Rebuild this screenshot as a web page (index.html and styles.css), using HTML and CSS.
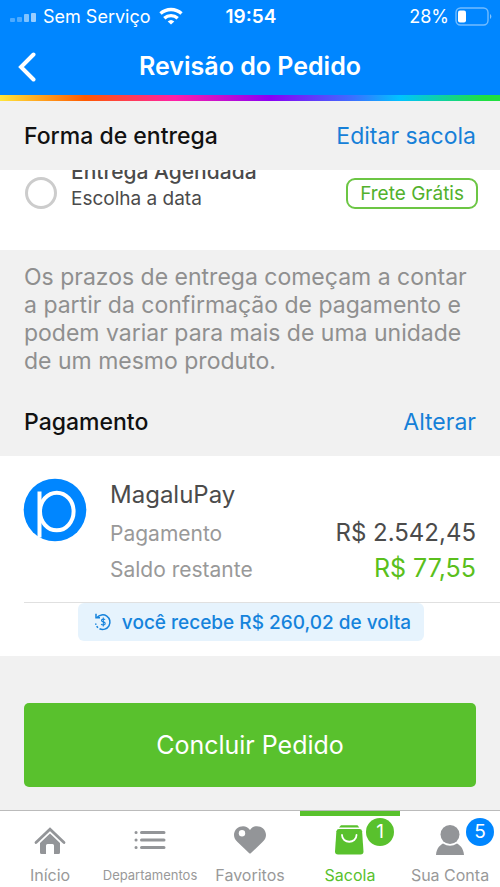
FILE: index.html
```html
<!DOCTYPE html>
<html lang="pt-BR">
<head>
<meta charset="utf-8">
<meta name="viewport" content="width=device-width, initial-scale=1">
<title>Revisão do Pedido</title>
<link rel="stylesheet" href="styles.css">
</head>
<body>
<header class="header">
  <div class="status">
    <div class="status-left">
      <svg class="signal" width="27" height="10" viewBox="0 0 27 10" fill="#fff" aria-hidden="true"><rect x="0" y="5" width="5" height="4" rx="1" opacity=".3"/><rect x="7" y="4" width="5" height="5" rx="1" opacity=".3"/><rect x="14" y="1" width="5" height="8" rx="1" opacity=".5"/><rect x="21" y="0" width="5" height="9" rx="1" opacity=".6"/></svg>
      <span>Sem Serviço</span>
      <svg class="wifi" width="24" height="18" viewBox="0 0 24 18" fill="none" stroke="#fff" stroke-width="3.400" aria-hidden="true"><path d="M1.500 6.600a15.500 15.500 0 0 1 21 0"/><path d="M5.300 11.200a10 10 0 0 1 13.400 0"/><path d="M12 17.500 8.700 14.400a4.900 4.900 0 0 1 6.600 0z" fill="#fff" stroke="none"/></svg>
    </div>
    <time class="clock">19:54</time>
    <div class="status-right">
      <span>28%</span>
      <svg width="37" height="19" viewBox="0 0 37 19" aria-hidden="true"><rect x="1" y="1" width="32" height="17" rx="4.500" fill="none" stroke="#fff" stroke-opacity=".45" stroke-width="1.400"/><rect x="3" y="3.400" width="8" height="12.200" rx="2" fill="#fff"/><path d="M35 7v5a3 3 0 0 0 0-5z" fill="#fff" opacity=".5"/></svg>
    </div>
  </div>
  <div class="nav">
    <button class="back" type="button" aria-label="Voltar"><svg width="18" height="30" viewBox="0 0 18 30" fill="none" stroke="#fff" stroke-width="4" stroke-linecap="round"><path d="M15.500 2.500 3 15l12.500 12.500"/></svg></button>
    <h1 class="title">Revisão do Pedido</h1>
  </div>
  <div class="rainbow"></div>
</header>
<main>
  <section>
    <div class="section-head">
      <h2>Forma de entrega</h2>
      <a href="#sacola">Editar sacola</a>
    </div>
    <div class="option">
      <input class="radio" type="radio" name="entrega" id="agendada">
      <label class="option-text" for="agendada"><span class="option-name">Entrega Agendada</span><span class="option-sub">Escolha a data</span></label>
      <span class="free">Frete Grátis</span>
    </div>
    <p class="note">Os prazos de entrega começam a contar a partir da confirmação de pagamento e podem variar para mais de uma unidade de um mesmo produto.</p>
  </section>
  <section>
    <div class="section-head">
      <h2>Pagamento</h2>
      <a href="#pagamento">Alterar</a>
    </div>
    <div class="pay-card">
      <div class="pay">
        <svg class="pay-logo" width="64" height="64" viewBox="0 0 64 64" role="img" aria-label="MagaluPay"><circle cx="32" cy="32" r="31.300" fill="#0086ff"/><g fill="none" stroke="#fff"><path d="M16.500 13.500v46" stroke-width="4"/><ellipse cx="33.800" cy="33.500" rx="16.800" ry="18.800" stroke-width="4"/></g></svg>
        <div class="pay-body">
          <h3>MagaluPay</h3>
          <dl class="amounts">
            <dt>Pagamento</dt><dd>R$ 2.542,45</dd>
            <dt>Saldo restante</dt><dd class="balance">R$ 77,55</dd>
          </dl>
        </div>
      </div>
      <div class="cashback-row">
        <p class="cashback">
          <svg width="18" height="18" viewBox="0 0 18 18" fill="none" stroke="#1583dc" stroke-width="1.500" aria-hidden="true"><path d="M3 4.500A7.300 7.300 0 1 1 5.500 15.700"/><path d="M4 14.700A7.300 7.300 0 0 1 1.700 10.500" stroke-dasharray="2 1.500"/><path d="M2 .8v4h4"/><path d="M11 6.800C10.500 5.800 7.500 5.700 7.500 7.400c0 2 3.700 1 3.700 3 0 1.900-3.400 1.800-4 .5M9.300 4.600v8.800" stroke-width="1.100"/></svg>
          <span>você recebe R$ 260,02 de volta</span>
        </p>
      </div>
    </div>
  </section>
  <div class="action"><button class="submit" type="button">Concluir Pedido</button></div>
</main>
<nav class="tabs">
  <a class="tab" href="#inicio">
    <svg width="32" height="32" viewBox="0 0 32 32" fill="#939598" aria-hidden="true"><path d="M2 18.500 16 5.200l14 13.300" fill="none" stroke="#939598" stroke-width="2.800" stroke-linecap="round"/><path d="M16 9.500 26 19v9.500q0 1.500-1.500 1.500H20v-8.500q0-1.500-1.500-1.500h-5q-1.500 0-1.500 1.500V30H7.500Q6 30 6 28.500V19z"/></svg>
    <span>Início</span>
  </a>
  <a class="tab" href="#departamentos">
    <svg width="32" height="32" viewBox="0 0 32 32" stroke="#939598" stroke-width="3" stroke-linecap="round" aria-hidden="true"><path d="M2 8.500h.1M2 16h.1M2 23.500h.1M7.500 8.500H30M7.500 16H30M7.500 23.500H30"/></svg>
    <span class="compact">Departamentos</span>
  </a>
  <a class="tab" href="#favoritos">
    <svg width="32" height="32" viewBox="0 0 32 32" aria-hidden="true"><path d="M16 6C12-1 0 2 0 11c0 3 1.500 5 3.500 7L15 29q1 1 2 0l11.500-11c2-2 3.500-4 3.500-7C32 2 20-1 16 6z" fill="#939598"/><circle cx="8" cy="9.300" r="3.200" fill="#fff"/></svg>
    <span>Favoritos</span>
  </a>
  <a class="tab active" href="#sacola" aria-current="page">
    <span class="icon"><svg width="32" height="32" viewBox="0 0 32 32" aria-hidden="true"><path d="M7 1.200h16.500l1.800 2.300H5z" fill="#59c12d"/><path d="M5 5h20.500q2.300 0 2.600 2.300l1.400 20.200q0 3-3 3H4q-3 0-3-3L2.400 7.300Q2.800 5 5 5z" fill="#59c12d"/><path d="M8 11c0 9 14.500 9 14.500 0" fill="none" stroke="#fff" stroke-width="1.800" stroke-linecap="round"/></svg><b class="badge">1</b></span>
    <span>Sacola</span>
  </a>
  <a class="tab" href="#conta">
    <span class="icon"><svg width="32" height="32" viewBox="0 0 32 32" fill="#939598" aria-hidden="true"><circle cx="16" cy="10.500" r="9.500"/><path d="M2 31C2.500 23.500 7 20.800 9 19.600q7 4.500 14 0c2 1.200 6.500 3.900 7 11.400z"/></svg><b class="badge blue">5</b></span>
    <span>Sua Conta</span>
  </a>
</nav>
</body>
</html>
```
FILE: styles.css
```css
* { box-sizing: border-box; }
body {
  margin: 0;
  min-height: 100vh;
  display: flex;
  flex-direction: column;
  background: #f1f1f1;
  color: #4b4b4b;
  font-family: Inter, "Liberation Sans", sans-serif;
}
h1, h2, h3, p, dl, dd { margin: 0; font-size: inherit; font-weight: inherit; }
a { color: #1680d8; text-decoration: none; }
button { font: inherit; border: 0; padding: 0; cursor: pointer; }
svg { display: block; flex: none; }

.header { background: #0086ff; color: #fff; }
.status {
  height: 32px;
  padding: 0 8px 0 10px;
  display: grid;
  grid-template-columns: 1fr auto 1fr;
  align-items: center;
  font-size: 18px;
}
.status-left, .status-right { display: flex; align-items: center; gap: 6px; }
.status-right { justify-content: flex-end; }
.signal { margin-top: 4px; }
.wifi { margin-left: 2px; }
.clock { font-size: 19px; font-weight: 600; }
.nav {
  height: 63px;
  padding: 6px 18px 0;
  display: grid;
  grid-template-columns: 18px 1fr 18px;
  align-items: center;
}
.back { background: none; color: #fff; }
.title { text-align: center; font-size: 25px; font-weight: 600; line-height: 32px; padding-bottom: 2px; }
.rainbow {
  height: 6px;
  background: linear-gradient(90deg, #ffe63b 0%, #ff5a00 17%, #ff1fa8 35%, #8a00f5 54%, #3f6bff 70%, #00c3ff 80%, #1fe040 97%);
}

.section-head {
  padding: 0 24px;
  height: 69px;
  display: flex;
  justify-content: space-between;
  align-items: center;
  font-size: 23px;
}
.section-head h2 { color: #111; font-weight: 500; }

.option {
  height: 80px;
  padding: 0 22px 0 25px;
  display: flex;
  gap: 14px;
  background: #fff;
  overflow: hidden;
}
.radio {
  appearance: none;
  flex: none;
  width: 32px;
  height: 32px;
  margin: 7px 0 0;
  border: 3px solid #ccc;
  border-radius: 50%;
  background: #fff;
}
.option-text {
  flex: 1;
  display: flex;
  flex-direction: column;
  margin-top: -12px;
}
.option-name { font-size: 21px; font-weight: 500; line-height: 28px; }
.option-sub { font-size: 19px; line-height: 26px; }
.free {
  align-self: flex-start;
  margin-top: 8px;
  padding: 0 12px;
  border: 2px solid #6cc644;
  border-radius: 9px;
  color: #52b12c;
  font-size: 19px;
  line-height: 27px;
}
.note {
  padding: 13px 24px 12px;
  color: #8f8f8f;
  font-size: 23px;
  line-height: 28px;
}

.pay-card { background: #fff; padding-bottom: 15px; }
.pay {
  display: flex;
  gap: 23px;
  padding: 22px 24px 0 23px;
  height: 146px;
}
.pay-body { flex: 1; }
.pay h3 { font-size: 24px; line-height: 34px; margin-bottom: 3px; }
.amounts {
  display: grid;
  grid-template-columns: 1fr auto;
  align-items: baseline;
  line-height: 35px;
}
.amounts dt { color: #999; font-size: 21px; }
.amounts dd { font-size: 24px; text-align: right; }
.amounts .balance { color: #5abf1c; font-size: 25px; }
.cashback-row {
  margin-left: 24px;
  padding-right: 22px;
  border-top: 1px solid #e0e0e0;
  display: flex;
  justify-content: center;
}
.cashback {
  height: 38px;
  padding: 0 13px 0 16px;
  display: flex;
  align-items: center;
  gap: 10px;
  border-radius: 6px;
  background: #e6f3fd;
  color: #1583dc;
  font-size: 19px;
  font-weight: 500;
}

.action { padding: 47px 24px 23px; }
.submit {
  width: 100%;
  height: 84px;
  border-radius: 5px;
  background: #59c12d;
  color: #fff;
  font-size: 25px;
}

.tabs {
  margin-top: auto;
  display: grid;
  grid-template-columns: repeat(5, minmax(0, 1fr));
  background: #fff;
  border-top: 1px solid #bbb;
}
.tab {
  height: 76px;
  border-top: 5px solid transparent;
  padding-top: 8px;
  display: flex;
  flex-direction: column;
  align-items: center;
  gap: 9px;
  color: #999;
  font-size: 16px;
  line-height: 20px;
}
.tab.active { color: #59c12d; border-top-color: #59c12d; }
.compact { font-size: 13px; }
.icon { position: relative; }
.badge {
  position: absolute;
  left: 32px;
  top: -6px;
  width: 28px;
  height: 28px;
  border-radius: 50%;
  background: #59c12d;
  color: #fff;
  font-size: 19px;
  font-weight: 400;
  line-height: 28px;
  text-align: center;
}
.badge.blue { background: #0086ff; }
```
